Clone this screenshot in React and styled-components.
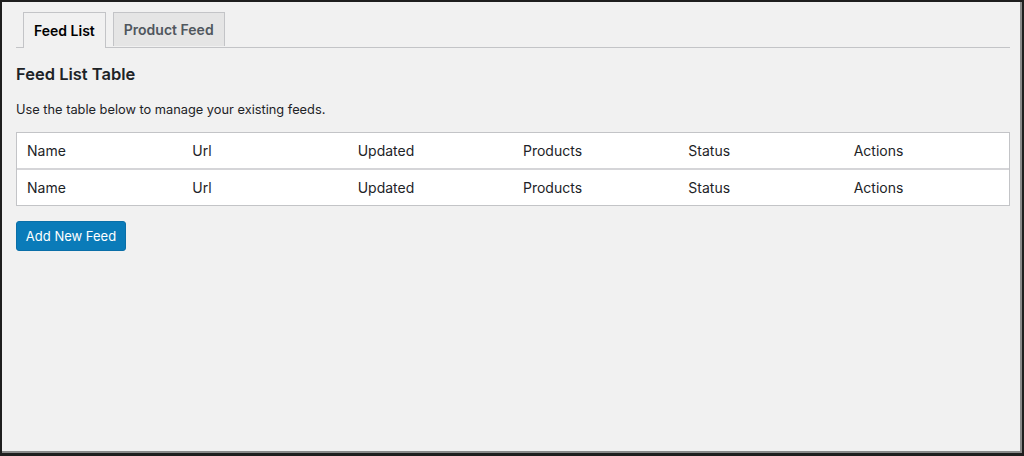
import React from "react";
import styled, { createGlobalStyle } from "styled-components";

const Global = createGlobalStyle`
  * { box-sizing: border-box; }
  html, body { margin: 0; padding: 0; background: #1e1e1e; }
  body { font-family: Inter, "Liberation Sans", Arial, sans-serif; color: #1d2327; }
`;

const Frame = styled.div`
  width: 1024px;
  height: 456px;
  background: #1e1e1e;
  padding: 2px 2px 3px 2px;
`;

const Screen = styled.div`
  width: 100%;
  height: 100%;
  background: #f1f1f1;
  border-right: 2px solid #8a8a8a;
  border-bottom: 2px solid #8a8a8a;
  padding: 10px 10px 0 14px;
`;

const TabBar = styled.nav`
  display: flex;
  gap: 7px;
  padding-left: 7px;
  border-bottom: 1px solid #c3c4c7;
`;

const Tab = styled.div`
  padding: 0 10px;
  display: flex;
  align-items: center;
  font-size: 14px;
  font-weight: 600;
  border: 1px solid #c3c4c7;
  border-bottom: none;
  margin-bottom: ${(p) => (p.$active ? "-1px" : "0")};
  background: ${(p) => (p.$active ? "#f1f1f1" : "#e5e5e5")};
  color: ${(p) => (p.$active ? "#000" : "#50575e")};
  height: ${(p) => (p.$active ? "36px" : "34px")};
`;

const Heading = styled.h2`
  margin: 16px 0 0 0;
  font-size: 16.5px;
  font-weight: 600;
  color: #1d2327;
  line-height: 20px;
`;

const Description = styled.p`
  margin: 17px 0 0 0;
  font-size: 12.8px;
  line-height: 18px;
  color: #1d2327;
`;

const Table = styled.div`
  margin: 13px 0 0 0;
  background: #fff;
  border: 1px solid #c3c4c7;
`;

const Row = styled.div`
  display: grid;
  grid-template-columns: repeat(6, 1fr);
  height: ${(p) => (p.$head ? "37px" : "35px")};
  align-items: center;
  border-bottom: ${(p) => (p.$head ? "2px solid #d5d5d8" : "none")};
`;

const Cell = styled.div`
  padding-left: 10px;
  font-size: 14px;
  color: #1d2327;
`;

const Button = styled.button`
  margin: 15px 0 0 0;
  height: 30px;
  width: 110px;
  padding: 0;
  background: #0a7bb9;
  border: 1px solid #0a6fa8;
  border-radius: 3px;
  color: #fff;
  font-family: inherit;
  font-size: 13px;
`;

const columns = ["Name", "Url", "Updated", "Products", "Status", "Actions"];

export default function App() {
  return (
    <>
      <Global />
      <Frame>
        <Screen>
          <TabBar>
            <Tab $active>Feed List</Tab>
            <Tab>Product Feed</Tab>
          </TabBar>
          <Heading>Feed List Table</Heading>
          <Description>Use the table below to manage your existing feeds.</Description>
          <Table>
            <Row $head>
              {columns.map((c) => (
                <Cell key={c}>{c}</Cell>
              ))}
            </Row>
            <Row>
              {columns.map((c) => (
                <Cell key={c}>{c}</Cell>
              ))}
            </Row>
          </Table>
          <Button>Add New Feed</Button>
        </Screen>
      </Frame>
    </>
  );
}
